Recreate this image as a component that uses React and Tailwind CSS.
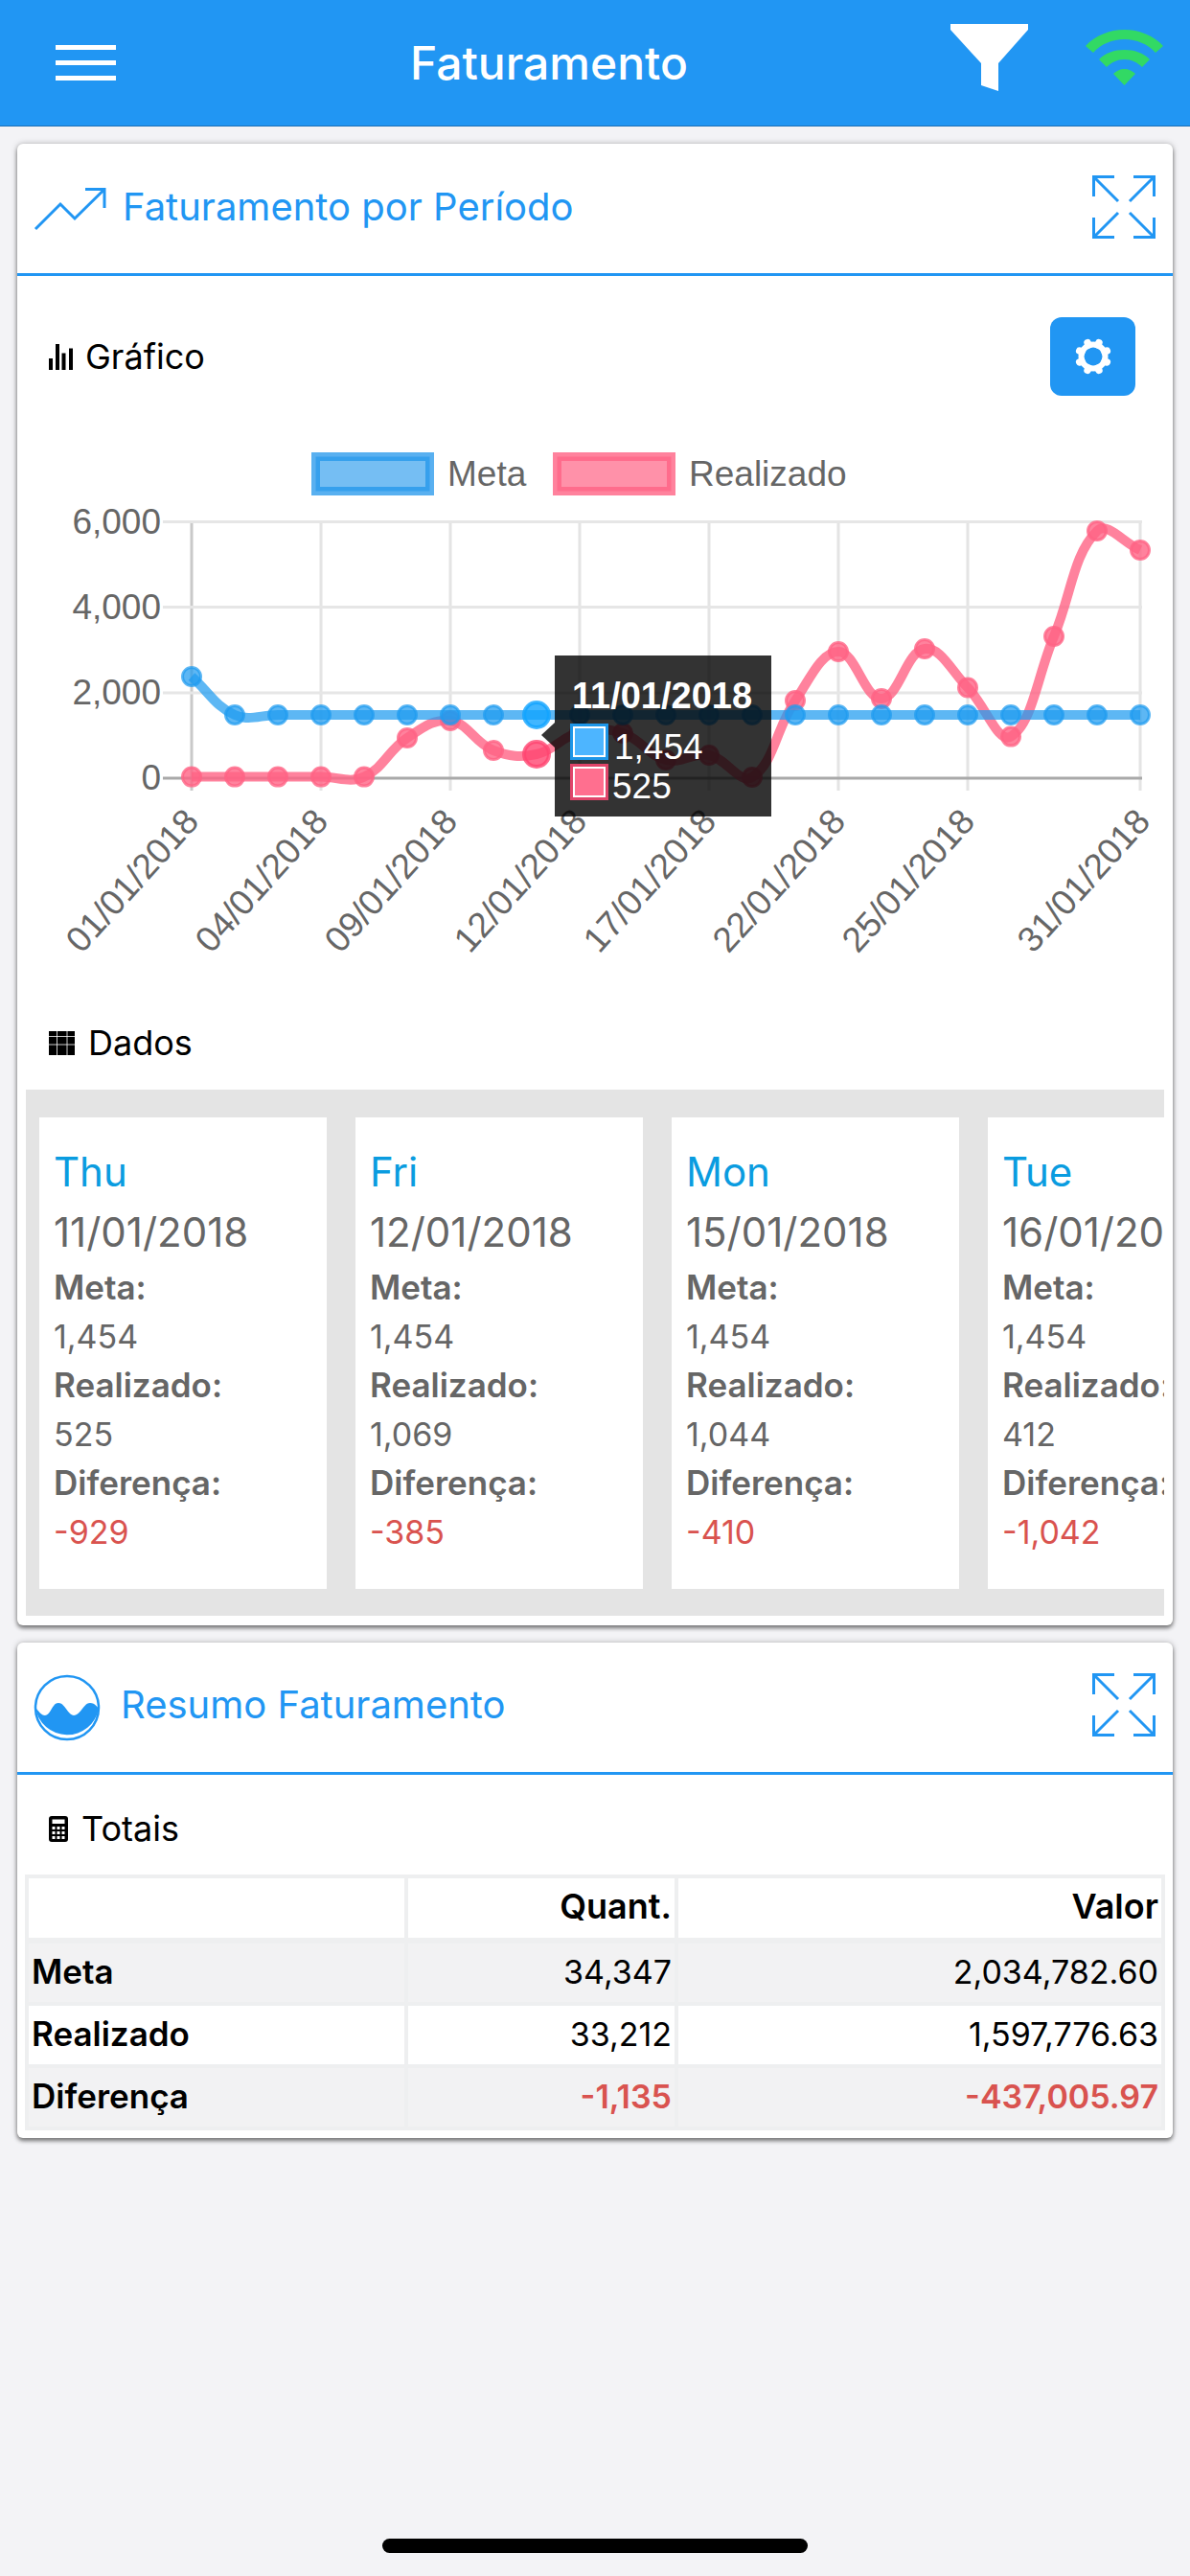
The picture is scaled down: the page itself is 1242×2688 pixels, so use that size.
import React from 'react';

const pointX = (i) => 200 + i * 45;

const metaY = [706, 746, 746, 746, 746, 746, 746, 746, 746, 746, 746, 746, 746, 746, 746, 746, 746, 746, 746, 746, 746, 746, 746];
const realY = [810.6, 810.6, 810.6, 810.6, 810.6, 770, 752, 783, 787, 764, 765, 793, 788, 811, 731, 680, 729, 677, 717.5, 768.6, 664, 554, 574];

const ticks = [
  { i: 0, label: '01/01/2018', dx: 0 },
  { i: 3, label: '04/01/2018', dx: 0 },
  { i: 6, label: '09/01/2018', dx: 0 },
  { i: 9, label: '12/01/2018', dx: 0 },
  { i: 12, label: '17/01/2018', dx: 0 },
  { i: 15, label: '22/01/2018', dx: 0 },
  { i: 18, label: '25/01/2018', dx: 0 },
  { i: 22, label: '31/01/2018', dx: 3 },
];

const yAxis = [
  { y: 544.5, label: '6,000' },
  { y: 633.5, label: '4,000' },
  { y: 723, label: '2,000' },
  { y: 812, label: '0' },
];

const days = [
  { day: 'Thu', date: '11/01/2018', meta: '1,454', real: '525', diff: '-929' },
  { day: 'Fri', date: '12/01/2018', meta: '1,454', real: '1,069', diff: '-385' },
  { day: 'Mon', date: '15/01/2018', meta: '1,454', real: '1,044', diff: '-410' },
  { day: 'Tue', date: '16/01/2018', meta: '1,454', real: '412', diff: '-1,042' },
];

// same spline as chart.js (tension 0.4)
const curve = (ys) => {
  const pts = ys.map((y, i) => ({ x: pointX(i), y }));
  const ctrl = pts.map((p, i) => {
    const prev = pts[i - 1] || p;
    const next = pts[i + 1] || p;
    const d01 = Math.hypot(p.x - prev.x, p.y - prev.y);
    const d12 = Math.hypot(next.x - p.x, next.y - p.y);
    const total = d01 + d12 || 1;
    const fa = (0.4 * d01) / total;
    const fb = (0.4 * d12) / total;
    return {
      inX: p.x - fa * (next.x - prev.x),
      inY: p.y - fa * (next.y - prev.y),
      outX: p.x + fb * (next.x - prev.x),
      outY: p.y + fb * (next.y - prev.y),
    };
  });
  let d = `M${pts[0].x} ${pts[0].y}`;
  for (let i = 1; i < pts.length; i++) {
    d += ` C${ctrl[i - 1].outX} ${ctrl[i - 1].outY} ${ctrl[i].inX} ${ctrl[i].inY} ${pts[i].x} ${pts[i].y}`;
  }
  return d;
};

const Series = ({ ys, color, hover }) => (
  <g>
    <path d={curve(ys)} fill="none" stroke={color} strokeWidth="10" />
    {ys.map((y, i) =>
      i === 8 ? (
        <circle key={i} cx={pointX(i)} cy={y} r="13" fill={hover} fillOpacity="0.8" stroke={hover} strokeOpacity="0.8" strokeWidth="4" />
      ) : (
        <circle key={i} cx={pointX(i)} cy={y} r="9.5" fill={color} stroke={color} strokeWidth="3" />
      )
    )}
  </g>
);

const Chart = () => (
  <div className="relative mt-[27px] h-[620px] w-[1206px]">
    <svg viewBox="18 440 1206 620" className="block h-[620px] w-[1206px]" fontFamily="'Liberation Sans', Arial, sans-serif" fontSize="36" fill="#666666">
      <rect x="329.5" y="476.5" width="119" height="36" fill="rgba(33,150,235,0.62)" stroke="rgba(33,150,235,0.75)" strokeWidth="9" />
      <text x="467" y="507" fontSize="37">Meta</text>
      <rect x="581.5" y="476.5" width="119" height="36" fill="rgba(255,99,132,0.7)" stroke="rgba(255,99,132,0.8)" strokeWidth="9" />
      <text x="719" y="507" fontSize="37">Realizado</text>

      {ticks.map((t) => (
        <line key={t.i} x1={pointX(t.i)} x2={pointX(t.i)} y1="543" y2="825" stroke={t.i === 0 ? '#c9c9c9' : '#e4e4e4'} strokeWidth="3" />
      ))}
      {yAxis.map((a) => (
        <g key={a.label}>
          <line x1="170" x2="1192" y1={a.y} y2={a.y} stroke={a.label === '0' ? '#a9a9a9' : '#e6e6e6'} strokeWidth="3" />
          <text x="168" y={a.y + 12} textAnchor="end" fontSize="37">{a.label}</text>
        </g>
      ))}
      {ticks.map((t) => (
        <text key={t.label} x={pointX(t.i) + t.dx} y="850" fontSize="37" textAnchor="end" dominantBaseline="central" transform={`rotate(-48 ${pointX(t.i) + t.dx} 850)`}>
          {t.label}
        </text>
      ))}

      <Series ys={realY} color="rgba(255,99,132,0.8)" hover="#ff4570" />
      <Series ys={metaY} color="rgba(30,155,240,0.72)" hover="#12a4ff" />
    </svg>

    {/* tooltip over the chart */}
    <div className="absolute left-[561px] top-[244px] h-[168px] w-[226px] bg-black/80 pl-[18px] pt-[22px] font-['Liberation_Sans',Arial,sans-serif] text-white">
      <div className="absolute left-[-14px] top-[70px] h-0 w-0 border-y-[13px] border-r-[14px] border-y-transparent border-r-black/80" />
      <div className="text-[38px] font-bold leading-[40px]">11/01/2018</div>
      <div className="-ml-[2px] mt-[9px] flex h-[38px] items-center gap-[6px]">
        <span className="h-[38px] w-[40px] border-[3px] border-[#1e96e8] bg-[#4db5ff] outline-2 -outline-offset-[5px] outline-white" />
        <span className="mt-[12px] text-[37px] leading-[40px]">1,454</span>
      </div>
      <div className="-ml-[2px] mt-[4px] flex h-[38px] items-center gap-[4px]">
        <span className="h-[38px] w-[40px] border-[3px] border-[#e0456a] bg-[#ff6f8f] outline-2 -outline-offset-[5px] outline-white" />
        <span className="mt-[10px] text-[37px] leading-[40px]">525</span>
      </div>
    </div>
  </div>
);

const ExpandIcon = ({ className }) => (
  <svg viewBox="0 0 66 66" className={`h-[66px] w-[66px] ${className}`} fill="none" stroke="#2196f3" strokeWidth="3">
    <path d="M23 1.5H1.5V22M1.5 1.5L27 27" />
    <path d="M43 1.5H64.5V22M64.5 1.5L39 27" />
    <path d="M1.5 44V64.5H23M1.5 64.5L27 39" />
    <path d="M64.5 44V64.5H43M64.5 64.5L39 39" />
  </svg>
);

const TrendIcon = () => (
  <svg viewBox="0 0 76 46" className="h-[46px] w-[76px]" fill="none" stroke="#2196f3" strokeWidth="3">
    <path d="M2 44L28 18L43 33L74 2.5M54 2.5H74V22" />
  </svg>
);

const WaveIcon = () => (
  <svg viewBox="0 0 70 70" className="h-[70px] w-[70px]">
    <circle cx="35" cy="35" r="33" fill="#ffffff" stroke="#2196f3" strokeWidth="2.5" />
    <path d="M2 35C5 38 8 43 12 43C18 43 19 30 26 30C33 30 36 43 42 43C49 43 52 30 59 30C63 30 66 33 68 36A33.5 33.5 0 0 1 2 35Z" fill="#2196f3" />
  </svg>
);

const BarsIcon = () => (
  <svg viewBox="0 0 25 27" className="h-[27px] w-[25px]" fill="#000000">
    <rect x="0" y="15" width="4" height="12" />
    <rect x="7" y="0" width="4" height="27" />
    <rect x="13.5" y="9.5" width="4" height="17.5" />
    <rect x="21" y="4.5" width="4" height="22.5" />
  </svg>
);

const GridIcon = () => (
  <svg viewBox="0 0 27 25" className="h-[25px] w-[27px]">
    <rect width="27" height="25" fill="#000000" />
    <path d="M8.5 0V25M19 0V25M0 5.5H27M0 14H27" stroke="#ffffff" strokeWidth="0.8" />
  </svg>
);

const CalcIcon = () => (
  <svg viewBox="0 0 20 27" className="h-[27px] w-[20px]">
    <rect width="20" height="27" rx="3" fill="#000000" />
    <rect x="3.5" y="3.5" width="13" height="4.5" fill="#ffffff" />
    {[11, 16, 21].map((y) =>
      [3.5, 8.5, 13.5].map((x) => <rect key={`${x}-${y}`} x={x} y={y} width="3" height="3" fill="#ffffff" />)
    )}
  </svg>
);

const GearIcon = () => (
  <svg viewBox="0 0 40 40" className="h-[40px] w-[40px]">
    <circle cx="20" cy="20" r="12.5" fill="none" stroke="#ffffff" strokeWidth="6" />
    {[0, 45, 90, 135, 180, 225, 270, 315].map((a) => (
      <line key={a} x1="20" y1="7" x2="20" y2="4.5" stroke="#ffffff" strokeWidth="7.5" strokeLinecap="round" transform={`rotate(${a + 22.5} 20 20)`} />
    ))}
  </svg>
);

const CardHeader = ({ icon, title, gap, titleShift, iconShift }) => (
  <div className="flex h-[138px] items-center justify-between border-b-[3px] border-[#2196f3] pl-[17px] pr-[18px]">
    <div className={`flex items-center ${gap}`}>
      {icon}
      <span className={`text-[40px] leading-[48px] text-[#2196f3] ${titleShift}`}>{title}</span>
    </div>
    <ExpandIcon className={iconShift} />
  </div>
);

const DayCard = ({ d }) => (
  <div className="h-[492px] w-[300px] shrink-0 bg-white pl-[15px] pt-[33px] text-[#666666]">
    <div className="text-[42px] leading-[48px] text-[#0a9ce0]">{d.day}</div>
    <div className="mt-[15px] whitespace-nowrap text-[42px] leading-[48px]">{d.date}</div>
    <div className="mt-[8px] whitespace-nowrap text-[35px] font-semibold leading-[51px]">Meta:</div>
    <div className="text-[34px] leading-[51px]">{d.meta}</div>
    <div className="whitespace-nowrap text-[35px] font-semibold leading-[51px]">Realizado:</div>
    <div className="text-[34px] leading-[51px]">{d.real}</div>
    <div className="whitespace-nowrap text-[35px] font-semibold leading-[51px]">Diferença:</div>
    <div className="text-[34px] leading-[51px] text-[#d9534f]">{d.diff}</div>
  </div>
);

const rows = [
  { name: 'Meta', qty: '34,347', val: '2,034,782.60', bg: 'bg-[#f2f2f3]', tone: 'text-black font-normal' },
  { name: 'Realizado', qty: '33,212', val: '1,597,776.63', bg: 'bg-white', tone: 'text-black font-normal' },
  { name: 'Diferença', qty: '-1,135', val: '-437,005.97', bg: 'bg-[#f2f2f3]', tone: 'text-[#d9534f] font-semibold' },
];

export default function App() {
  return (
    <div className="flex h-[2688px] w-[1242px] flex-col overflow-hidden bg-[#f3f3f6] font-['Inter','Noto_Sans',sans-serif]">
      <header className="flex h-[132px] shrink-0 items-center border-b border-[#1b6fb5] bg-[#2196f3] pl-[58px]">
        <div className="flex h-[37px] w-[63px] flex-col justify-between">
          <span className="h-[5px] bg-white" />
          <span className="h-[5px] bg-white" />
          <span className="h-[5px] bg-white" />
        </div>
        <div className="ml-[307px] text-[48px] font-medium leading-[56px] text-white">Faturamento</div>
        <svg viewBox="0 0 81 70" className="mb-[12px] ml-auto h-[70px] w-[81px]" fill="#ffffff">
          <path d="M0 0H81V6L50 41V70L32 64V41L0 6Z" />
        </svg>
        <svg viewBox="0 0 81 58" className="mb-[12px] ml-[60px] mr-[28px] h-[58px] w-[81px]" fill="#32d964">
          <path d="M0 17C10 6 25 0 40.5 0C56 0 71 6 81 17L73 24C65 15 53 10 40.5 10C28 10 16 15 8 24Z" />
          <path d="M14 31C21 24 30 21 40.5 21C51 21 60 24 67 31L59 39C54 34 48 31 40.5 31C33 31 27 34 22 39Z" />
          <path d="M29 46C32 43 36 41 40.5 41C45 41 49 43 52 46L40.5 58Z" />
        </svg>
      </header>

      <div className="flex flex-col gap-[18px] px-[18px] pt-[18px]">
        <section className="rounded-[6px] bg-white pb-[10px] shadow-[0_3px_4px_rgba(0,0,0,0.45),0_0_6px_rgba(0,0,0,0.25)]">
          <CardHeader icon={<TrendIcon />} title="Faturamento por Período" gap="gap-[17px]" titleShift="mb-[3px]" iconShift="mb-[4px]" />
          <div className="mt-[43px] flex items-center justify-between pl-[33px] pr-[39px]">
            <div className="flex items-center gap-[13px] text-[36px] leading-[44px] text-black">
              <BarsIcon />
              <span>Gráfico</span>
            </div>
            <button className="flex h-[82px] w-[89px] items-center justify-center rounded-[12px] bg-[#2196f3]">
              <GearIcon />
            </button>
          </div>
          <Chart />
          <div className="flex h-[56px] items-center gap-[14px] pl-[33px] text-[36px] text-black">
            <GridIcon />
            <span>Dados</span>
          </div>
          <div className="mx-[9px] mt-[21px] flex gap-[30px] overflow-hidden bg-[#e4e4e4] pb-[28px] pl-[14px] pt-[29px]">
            {days.map((d) => (
              <DayCard key={d.date} d={d} />
            ))}
          </div>
        </section>

        <section className="rounded-[6px] bg-white pb-[8px] shadow-[0_3px_4px_rgba(0,0,0,0.45),0_0_6px_rgba(0,0,0,0.25)]">
          <CardHeader icon={<WaveIcon />} title="Resumo Faturamento" gap="gap-[21px]" titleShift="mb-[6px]" iconShift="mb-[6px]" />
          <div className="mt-[28px] flex h-[56px] items-center gap-[14px] pl-[33px] text-[36px] text-black">
            <CalcIcon />
            <span>Totais</span>
          </div>
          <table className="ml-[8px] mt-[20px] w-[1190px] table-fixed border-separate border-spacing-[4px] bg-[#eeeff0] text-[34px] text-black">
            <colgroup>
              <col className="w-[392px]" />
              <col className="w-[278px]" />
              <col className="w-[504px]" />
            </colgroup>
            <thead>
              <tr className="h-[64px] bg-white">
                <th className="border-b-2 border-[#eeeff0] p-0" />
                <th className="border-b-2 border-[#eeeff0] p-0 pb-[4px] pr-[3px] text-right text-[36px] font-semibold">Quant.</th>
                <th className="border-b-2 border-[#eeeff0] p-0 pb-[4px] pr-[3px] text-right text-[36px] font-semibold">Valor</th>
              </tr>
            </thead>
            <tbody>
              {rows.map((r) => (
                <tr key={r.name} className={`h-[61px] ${r.bg}`}>
                  <td className="p-0 pb-[2px] pl-[3px] text-[35px] font-semibold">{r.name}</td>
                  <td className={`p-0 pb-[2px] pr-[3px] text-right ${r.tone}`}>{r.qty}</td>
                  <td className={`p-0 pb-[2px] pr-[3px] text-right ${r.tone}`}>{r.val}</td>
                </tr>
              ))}
            </tbody>
          </table>
        </section>
      </div>

      <div className="mx-auto mb-[24px] mt-auto h-[15px] w-[444px] rounded-[8px] bg-black" />
    </div>
  );
}
